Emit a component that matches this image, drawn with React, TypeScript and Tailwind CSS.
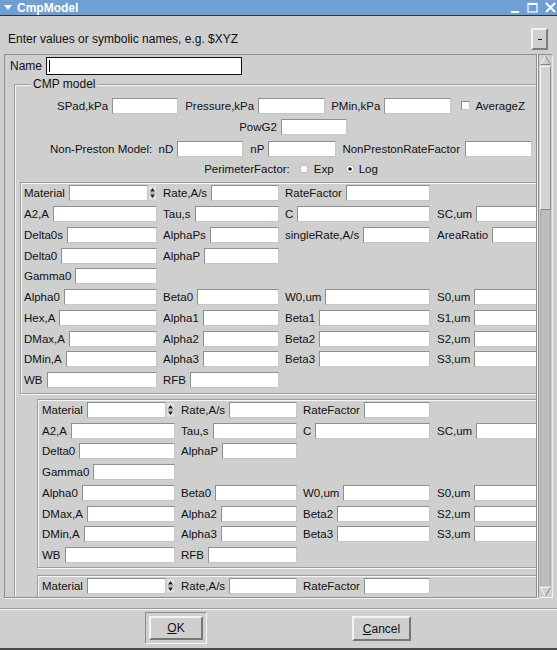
import React from 'react'

type Cell = string | null

const frameA: Cell[][] = [
  ['Material', 'Rate,A/s', 'RateFactor', null],
  ['A2,A', 'Tau,s', 'C', 'SC,um'],
  ['Delta0s', 'AlphaPs', 'singleRate,A/s', 'AreaRatio'],
  ['Delta0', 'AlphaP', null, null],
  ['Gamma0', null, null, null],
  ['Alpha0', 'Beta0', 'W0,um', 'S0,um'],
  ['Hex,A', 'Alpha1', 'Beta1', 'S1,um'],
  ['DMax,A', 'Alpha2', 'Beta2', 'S2,um'],
  ['DMin,A', 'Alpha3', 'Beta3', 'S3,um'],
  ['WB', 'RFB', null, null],
]

const frameB: Cell[][] = [
  ['Material', 'Rate,A/s', 'RateFactor', null],
  ['A2,A', 'Tau,s', 'C', 'SC,um'],
  ['Delta0', 'AlphaP', null, null],
  ['Gamma0', null, null, null],
  ['Alpha0', 'Beta0', 'W0,um', 'S0,um'],
  ['DMax,A', 'Alpha2', 'Beta2', 'S2,um'],
  ['DMin,A', 'Alpha3', 'Beta3', 'S3,um'],
  ['WB', 'RFB', null, null],
]

const frameC: Cell[][] = [['Material', 'Rate,A/s', 'RateFactor', null]]

const colsA = ['w-[133px] mr-[6px]', 'w-[116px] mr-[6px]', 'w-[145px] mr-[7px]', 'w-[133px]']
const colsB = ['w-[133px] mr-[6px]', 'w-[116px] mr-[6px]', 'w-[127px] mr-[7px]', 'w-[133px]']

const etched = 'border border-[#9c9c9c] shadow-[inset_1px_1px_0_#f7f7f7,1px_1px_0_#f7f7f7]'

function Field({ className = '' }: { className?: string }) {
  return (
    <div
      className={`h-[16px] bg-white border border-[#c6c6c6] border-t-[#8f8f8f] border-l-[#8f8f8f] ${className}`}
    />
  )
}

function Spinner() {
  return (
    <svg width="9" height="14" viewBox="0 0 9 14" className="shrink-0">
      <rect x="1" y="0.5" width="7" height="13" fill="#e4e4e4" />
      <polygon points="2,5.5 4.5,2 7,5.5" fill="#1e1e1e" />
      <line x1="1.5" y1="7" x2="7.5" y2="7" stroke="#8a8a8a" />
      <polygon points="2,8.5 4.5,12 7,8.5" fill="#1e1e1e" />
    </svg>
  )
}

function MatFrame({ rows, cols, className }: { rows: Cell[][]; cols: string[]; className: string }) {
  return (
    <div className={`${etched} ${className}`}>
      {rows.map((r, i) => (
        <div key={i} className="flex h-[20.75px] items-center">
          {r.map((c, j) => (
            <div key={j} className={`${cols[j]} flex shrink-0 items-center`}>
              {c && (
                <>
                  <span className="mr-[4px] whitespace-nowrap">{c}</span>
                  <Field className="flex-1 min-w-0" />
                  {c === 'Material' && <Spinner />}
                </>
              )}
            </div>
          ))}
        </div>
      ))}
    </div>
  )
}

function Radio({ on }: { on?: boolean }) {
  return (
    <svg width="10" height="10" viewBox="0 0 10 10" className="shrink-0">
      <circle cx="5" cy="5" r="4" fill="#fff" stroke="#b4b4b4" />
      {on && <circle cx="5" cy="5" r="1.8" fill="#111" />}
    </svg>
  )
}

function Arrow({ down }: { down?: boolean }) {
  return (
    <svg width="13" height="11" viewBox="0 0 13 11">
      {down ? (
        <>
          <polyline points="1.5,1.5 11.5,1.5" fill="none" stroke="#f6f6f6" />
          <polyline points="1.5,1.5 6.5,10" fill="none" stroke="#f6f6f6" />
          <polyline points="11.5,1.5 6.5,10" fill="none" stroke="#8c8c8c" />
        </>
      ) : (
        <>
          <polyline points="6.5,1 1.5,9.5" fill="none" stroke="#f6f6f6" />
          <polyline points="6.5,1 11.5,9.5 1.5,9.5" fill="none" stroke="#8c8c8c" />
        </>
      )}
    </svg>
  )
}

export default function App() {
  return (
    <div className="w-[557px] h-[650px] overflow-hidden bg-[#cfcfcf] text-[11.5px] leading-[14px] text-[#111] font-['Liberation_Sans',Arial,sans-serif]">
      {/* title bar */}
      <div className="flex h-[16px] items-center bg-[#709fd3] border-b border-[#2c3440] text-white">
        <svg width="8" height="6" viewBox="0 0 8 6" className="ml-[4px] mr-[5px]">
          <polygon points="0,0 8,0 4,5" fill="#fff" />
        </svg>
        <span className="text-[12px] font-bold">CmpModel</span>
        <div className="ml-auto mr-[1px] flex items-center gap-[7px]">
          <svg width="10" height="11" viewBox="0 0 10 11">
            <rect x="1" y="9" width="8" height="2" fill="#fff" />
          </svg>
          <svg width="11" height="11" viewBox="0 0 11 11">
            <rect x="1" y="1.5" width="9" height="8.5" fill="none" stroke="#fff" strokeWidth="1.2" />
            <rect x="1" y="1" width="9" height="2" fill="#fff" />
          </svg>
          <svg width="11" height="11" viewBox="0 0 11 11">
            <path d="M1 1 L10 10 M10 1 L1 10" stroke="#fff" strokeWidth="1.8" />
          </svg>
        </div>
      </div>

      {/* hint row */}
      <div className="flex h-[38px] items-center pt-[8px] pl-[8px] pr-[9px]">
        <span className="text-[12px]">Enter values or symbolic names, e.g. $XYZ</span>
        <div className="ml-auto flex h-[22px] w-[17px] items-center justify-center border-2 border-[#f4f4f4] border-r-[#7c7c7c] border-b-[#7c7c7c]">
          <div className="h-[1px] w-[4px] bg-[#222]" />
        </div>
      </div>

      {/* scroll area */}
      <div className="flex h-[544px]">
        <div className="ml-[4px] w-[533px] h-[544px] overflow-hidden border border-[#8e8e8e] shadow-[1px_1px_0_#f4f4f4]">
          <div className="w-[640px]">
            <div className="flex items-center pl-[5px] pt-[2px]">
              <span className="mr-[4px] text-[12px]">Name</span>
              <div className="flex h-[18px] w-[196px] items-center bg-white border border-[#111]">
                <div className="ml-[2px] h-[12px] w-[1px] bg-black" />
              </div>
            </div>

            <div className={`mt-[9px] ml-[9px] w-[554px] ${etched}`}>
              <div className="-mt-[8px] ml-[16px] w-fit bg-[#cfcfcf] px-[2px] text-[12px]">CMP model</div>

              <div className="pt-[4px]">
                <div className="flex h-[21px] items-center justify-center">
                  <span className="mr-[4px]">SPad,kPa</span>
                  <Field className="w-[66px]" />
                  <span className="ml-[7px] mr-[4px]">Pressure,kPa</span>
                  <Field className="w-[67px]" />
                  <span className="ml-[6px] mr-[4px]">PMin,kPa</span>
                  <Field className="w-[67px]" />
                  <div className="ml-[10px] mr-[5px] h-[9px] w-[9px] bg-white border border-[#c6c6c6] border-t-[#8a8a8a] border-l-[#8a8a8a]" />
                  <span>AverageZ</span>
                </div>
                <div className="flex h-[22px] items-center justify-center pl-[4px]">
                  <span className="mr-[4px]">PowG2</span>
                  <Field className="w-[66px]" />
                </div>
                <div className="flex h-[22px] items-center justify-center">
                  <span className="mr-[4px] whitespace-pre">Non-Preston Model:  nD</span>
                  <Field className="w-[66px]" />
                  <span className="ml-[7px] mr-[4px]">nP</span>
                  <Field className="w-[68px]" />
                  <span className="ml-[6px] mr-[5px]">NonPrestonRateFactor</span>
                  <Field className="w-[67px]" />
                </div>
                <div className="flex h-[18px] items-center justify-center">
                  <span className="mr-[9px]">PerimeterFactor:</span>
                  <Radio />
                  <span className="ml-[5px] mr-[11px]">Exp</span>
                  <Radio on />
                  <span className="ml-[4px]">Log</span>
                </div>
              </div>

              <MatFrame rows={frameA} cols={colsA} className="mt-[4px] ml-[5px] pl-[3px] pb-[2px]" />
              <MatFrame rows={frameB} cols={colsB} className="mt-[5px] ml-[22px] pl-[4px] pb-[1px]" />
              <MatFrame rows={frameC} cols={colsB} className="mt-[7px] ml-[22px] pl-[4px] pb-[40px]" />
            </div>
          </div>
        </div>

        {/* scrollbar */}
        <div className="ml-[1px] flex h-[544px] w-[15px] flex-col border border-[#8e8e8e] border-r-[#f2f2f2] border-b-[#f2f2f2]">
          <div className="flex h-[11px] justify-center">
            <Arrow />
          </div>
          <div className="h-[144px] mx-[1px] border border-[#f6f6f6] border-r-[#8a8a8a] border-b-[#8a8a8a] bg-[#d3d3d3]" />
          <div className="flex-1 mx-[1px] bg-[#bcbcbc] border-x border-[#a8a8a8]" />
          <div className="flex h-[11px] justify-center">
            <Arrow down />
          </div>
        </div>
      </div>

      {/* separator */}
      <div className="mt-[10px] h-[2px] border-t border-[#9a9a9a] border-b border-b-[#f6f6f6]" />

      {/* buttons */}
      <div className="mt-[2px] flex h-[32px] items-start pl-[145px]">
        <div className="h-[32px] w-[62px] border border-[#8c8c8c] border-r-[#f4f4f4] border-b-[#f4f4f4] p-[3px]">
          <div className="flex h-full w-full items-center justify-center border-2 border-[#f4f4f4] border-r-[#777] border-b-[#777] text-[12px]">
            <span>
              <span className="underline">O</span>K
            </span>
          </div>
        </div>
        <div className="ml-[145px] mt-[4px] flex h-[25px] w-[59px] items-center justify-center border-2 border-[#f4f4f4] border-r-[#777] border-b-[#777] text-[12px]">
          <span>
            <span className="underline">C</span>ancel
          </span>
        </div>
      </div>

      <div className="mt-[4px] h-[2px] bg-[#4a4a4a]" />
    </div>
  )
}
